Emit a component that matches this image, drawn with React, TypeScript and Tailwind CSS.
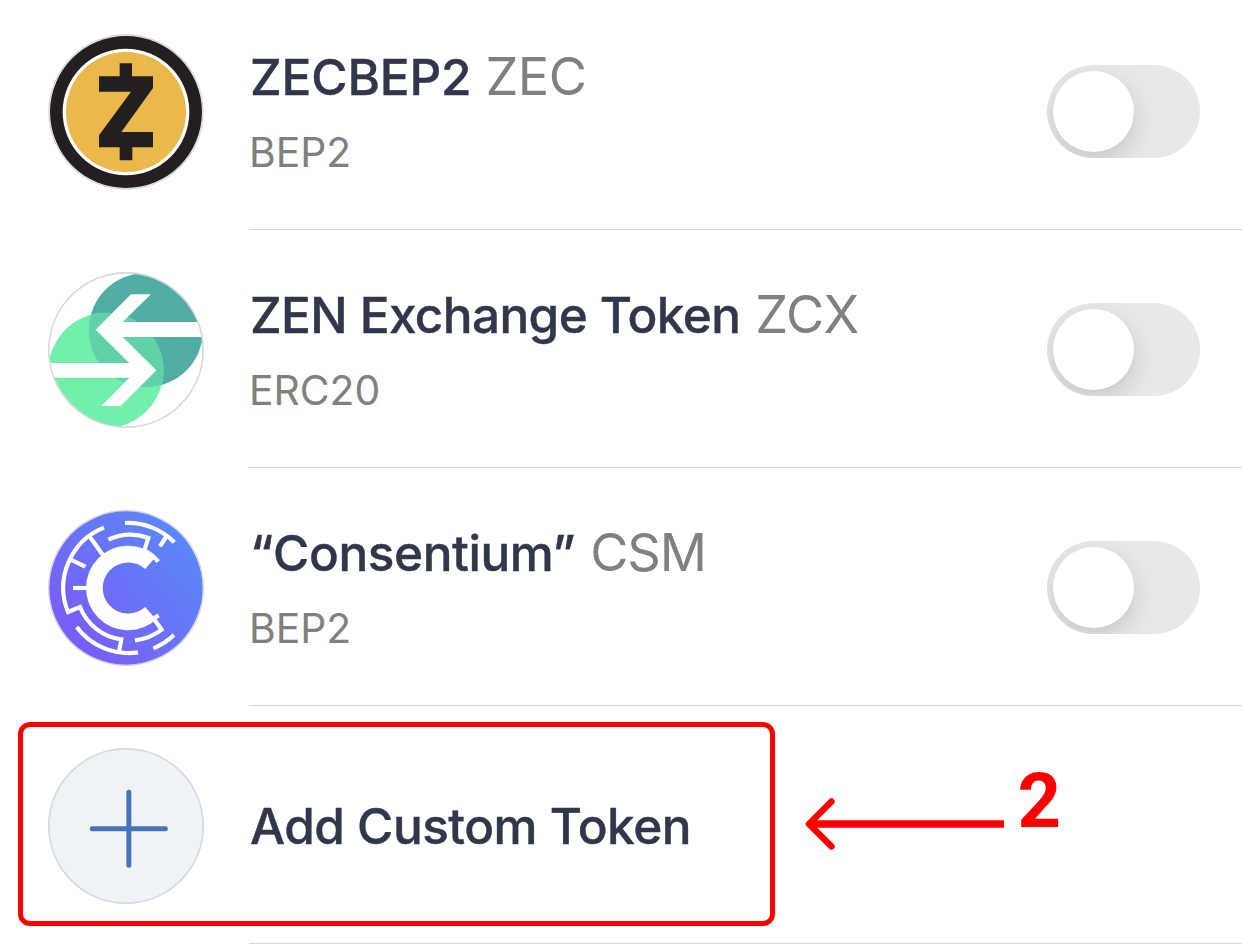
import type { ReactNode } from "react";

function ZecIcon() {
  return (
    <svg viewBox="24 24 468 468" className="size-[156px] shrink-0">
      <circle cx="258" cy="258" r="231" fill="#fff" stroke="#d6d6d6" strokeWidth="4" />
      <circle cx="258" cy="258" r="228" fill="#231f20" />
      <circle cx="258" cy="258" r="190" fill="#fff" />
      <circle cx="258" cy="258" r="180" fill="#eab84b" />
      <polygon
        fill="#231f20"
        points="239,112 276,112 276,151 339,151 339,186 244,318 339,318 339,364 277,364 277,403 239,403 239,364 177,364 177,328 273,197 177,197 177,151 239,151"
      />
    </svg>
  );
}

function ZenIcon() {
  return (
    <svg viewBox="24 24 468 468" className="size-[156px] shrink-0">
      <defs>
        <clipPath id="zen-disc">
          <circle cx="258" cy="258" r="231" />
        </clipPath>
        <clipPath id="zen-dark">
          <circle cx="318" cy="198" r="171.500" />
        </clipPath>
      </defs>
      <g clipPath="url(#zen-disc)">
        <circle cx="318" cy="198" r="171.500" fill="#4fada4" />
        <circle cx="198" cy="319" r="172.500" fill="#70f0ab" />
        <g clipPath="url(#zen-dark)">
          <circle cx="198" cy="319" r="172.500" fill="#61d2a8" />
        </g>
        <polygon
          fill="#fff"
          points="167,197 273,91 333,91 248,174 492,174 492,219 248,219 349,319 242,426 184,426 268,341 24,341 24,297 268,297"
        />
      </g>
      <circle cx="258" cy="258" r="231.500" fill="none" stroke="#d8d8d8" strokeWidth="5" />
    </svg>
  );
}

function ConsentiumIcon() {
  return (
    <svg viewBox="24 24 468 468" className="size-[156px] shrink-0">
      <defs>
        <linearGradient id="csm-fill" x1="0.1" y1="0.95" x2="0.9" y2="0.25">
          <stop offset="0" stopColor="#7c58f6" />
          <stop offset="1" stopColor="#5b86f8" />
        </linearGradient>
      </defs>
      <circle cx="258" cy="258" r="232" fill="#fff" stroke="#d4d4d8" strokeWidth="4" />
      <circle cx="258" cy="258" r="230" fill="url(#csm-fill)" />
      <g fill="none" stroke="#fff" strokeWidth="12.500">
        <path d="M332 182A101.500 101.500 0 1 0 332 334" strokeWidth="50" />
        <path d="M318 148A122 122 0 0 1 355 179" />
        <path d="M255 63A195 195 0 0 1 403 121" />
        <path d="M380 102L360 133" />
        <path d="M205 113A157 157 0 0 1 325 108L313 145" />
        <path d="M192 77A194 194 0 0 0 84 330L120 315A155 155 0 0 0 244 412L237 450" />
        <path d="M150 105L188 158" />
        <path d="M92 173L136 194" />
        <path d="M99 258H142" />
        <path d="M110 375A194 194 0 0 0 294 451" />
        <path d="M340 439A197 197 0 0 0 402 399" />
        <path d="M285 415A159 159 0 0 0 365 383L341 350" />
        <path d="M334 353L356 340" />
      </g>
    </svg>
  );
}

function AddIcon() {
  return (
    <svg viewBox="114 99 468 468" className="size-[156px] shrink-0">
      <circle cx="348" cy="333" r="231.500" fill="#eff3f8" stroke="#d8d8d8" strokeWidth="5" />
      <path d="M247 341.500H466M356.500 232V451" stroke="#4574b8" strokeWidth="15" strokeLinecap="round" />
    </svg>
  );
}

function Toggle() {
  return (
    <button
      type="button"
      role="switch"
      aria-checked="false"
      className="mr-[42px] flex h-[93px] w-[153px] shrink-0 items-center overflow-hidden rounded-full bg-[#e8e8e8] pl-1.5"
    >
      <span className="size-[81px] rounded-full bg-white shadow-[0_9px_24px_rgba(0,0,0,0.15)]" />
    </button>
  );
}

type Token = {
  name: string;
  nameClass: string;
  symbol: string;
  symbolClass: string;
  network: string;
  icon: ReactNode;
};

const tokens: Token[] = [
  {
    name: "ZECBEP2",
    nameClass: "tracking-[-0.15px]",
    symbol: "ZEC",
    symbolClass: "ml-[14px] tracking-[-0.5px]",
    network: "BEP2",
    icon: <ZecIcon />,
  },
  {
    name: "ZEN Exchange Token",
    nameClass: "tracking-[-0.62px]",
    symbol: "ZCX",
    symbolClass: "ml-[15px] tracking-[-0.5px]",
    network: "ERC20",
    icon: <ZenIcon />,
  },
  {
    name: "“Consentium”",
    nameClass: "tracking-[-0.42px]",
    symbol: "CSM",
    symbolClass: "ml-[15px] tracking-[-1.1px]",
    network: "BEP2",
    icon: <ConsentiumIcon />,
  },
];

function TokenRow({ token }: { token: Token }) {
  return (
    <li className="flex h-[238px] pl-12">
      <div className="pt-[42px]">{token.icon}</div>
      <div className="ml-[45px] flex flex-1 justify-between border-b border-[#d6d6d6]">
        <div className="pt-[52px] whitespace-nowrap">
          <div className="flex h-[64px] items-baseline pl-px leading-[64px]">
            <span
              className={`text-[49.5px] font-medium text-[#31374a] [-webkit-text-stroke:0.4px_#31374a] ${token.nameClass}`}
            >
              {token.name}
            </span>
            <span className={`text-[52.3px] text-[#808080] ${token.symbolClass}`}>{token.symbol}</span>
          </div>
          <div className="mt-[19px] text-[40.8px] leading-[50px] text-[#808080]">{token.network}</div>
        </div>
        <div className="pt-[73px]">
          <Toggle />
        </div>
      </div>
    </li>
  );
}

export default function App() {
  return (
    <main className="relative h-[944px] w-[1242px] overflow-hidden bg-white font-['Inter',sans-serif]">
      <ul className="-mt-2">
        {tokens.map((token) => (
          <TokenRow key={token.symbol} token={token} />
        ))}
        <li className="flex h-[238px] pl-12">
          <div className="pt-[42px]">
            <AddIcon />
          </div>
          <div className="ml-[45px] flex flex-1 items-center border-b border-[#d6d6d6]">
            <span className="pt-1 pl-px text-[49.5px] font-medium tracking-[-0.5px] whitespace-nowrap text-[#31374a] [-webkit-text-stroke:0.4px_#31374a]">
              Add Custom Token
            </span>
          </div>
        </li>
      </ul>
      <div className="absolute top-[722px] left-[18px] h-[204px] w-[757px] rounded-xl border-5 border-[#ff0000]" />
      <div className="absolute top-[756px] left-[800px] flex">
        <svg viewBox="0 0 204 100" className="mt-[18px] h-[100px] w-[204px]" fill="none" stroke="#ff0000">
          <path d="M9 50H204" strokeWidth="7.300" />
          <path d="M31.500 27.500L9 50L31.500 72.500" strokeWidth="6.500" strokeLinecap="round" strokeLinejoin="round" />
        </svg>
        <span className="mt-px ml-[13.5px] font-['Roboto',sans-serif] text-[76px] leading-[88px] font-bold text-[#ff0000]">
          2
        </span>
      </div>
    </main>
  );
}
